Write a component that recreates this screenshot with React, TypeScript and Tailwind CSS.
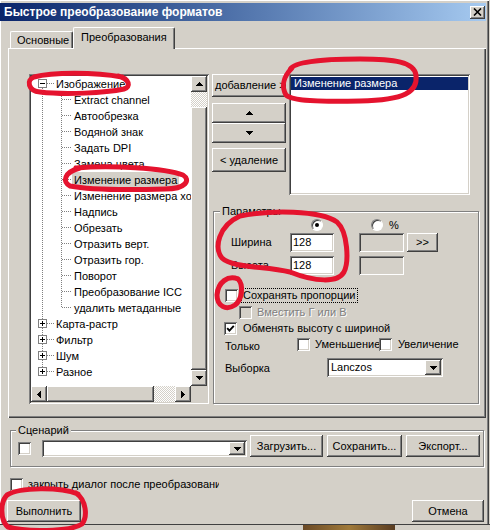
import React from "react";

const raised =
  "bg-[#d4d0c8] shadow-[inset_-1px_-1px_#404040,inset_1px_1px_#ffffff,inset_-2px_-2px_#808080,inset_2px_2px_#d4d0c8]";
const sunken =
  "shadow-[inset_1px_1px_#808080,inset_-1px_-1px_#ffffff,inset_2px_2px_#404040,inset_-2px_-2px_#d4d0c8]";
const hatch =
  "bg-[repeating-conic-gradient(#ffffff_0%_25%,#d4d0c8_0%_50%)] bg-[length:2px_2px]";
const etched =
  "border border-[#808080] shadow-[inset_1px_1px_0_#ffffff,1px_1px_0_#ffffff]";

type Dir = "up" | "down" | "left" | "right";

// little black scroll / combo arrows, drawn pixel by pixel
const Tri = ({ dir }: { dir: Dir }) => {
  const vertical = dir === "up" || dir === "down";
  return (
    <svg width={vertical ? 7 : 4} height={vertical ? 4 : 7} shapeRendering="crispEdges">
      {[0, 1, 2, 3].map((i) => {
        const len = 7 - 2 * i;
        if (dir === "down") return <rect key={i} x={i} y={i} width={len} height={1} fill="#000" />;
        if (dir === "up") return <rect key={i} x={i} y={3 - i} width={len} height={1} fill="#000" />;
        if (dir === "right") return <rect key={i} x={i} y={i} width={1} height={len} fill="#000" />;
        return <rect key={i} x={3 - i} y={i} width={1} height={len} fill="#000" />;
      })}
    </svg>
  );
};

const Check = ({ checked, disabled }: { checked?: boolean; disabled?: boolean }) => (
  <span
    className={`w-[13px] h-[13px] shrink-0 flex items-center justify-center ${sunken} ${
      disabled ? "bg-[#d4d0c8]" : "bg-white"
    }`}
  >
    {checked && (
      <svg width="13" height="13">
        <path d="M3.2 6.2 L5.4 8.6 L9.8 3.8" stroke="#000" strokeWidth="1.9" fill="none" />
      </svg>
    )}
  </span>
);

const Radio = ({ on }: { on?: boolean }) => (
  <span className="w-[12px] h-[12px] rounded-full bg-white border border-t-[#808080] border-l-[#808080] border-r-white border-b-white shadow-[inset_1px_1px_#404040] flex items-center justify-center">
    {on && <span className="w-[4px] h-[4px] rounded-full bg-black" />}
  </span>
);

const Combo = ({ text, className }: { text?: string; className: string }) => (
  <div className={`${className} ${sunken} bg-white p-[2px] flex`}>
    <span className="flex-1 pl-[2px] leading-[15px]">{text}</span>
    <span className={`${raised} w-[16px] flex items-center justify-center`}>
      <Tri dir="down" />
    </span>
  </div>
);

type Node = { t: string; lvl: 0 | 1; exp?: "+" | "-"; sel?: boolean };

const nodes: Node[] = [
  { t: "Изображение", lvl: 0, exp: "-" },
  { t: "Extract channel", lvl: 1 },
  { t: "Автообрезка", lvl: 1 },
  { t: "Водяной знак", lvl: 1 },
  { t: "Задать DPI", lvl: 1 },
  { t: "Замена цвета", lvl: 1 },
  { t: "Изменение размера", lvl: 1, sel: true },
  { t: "Изменение размера холста", lvl: 1 },
  { t: "Надпись", lvl: 1 },
  { t: "Обрезать", lvl: 1 },
  { t: "Отразить верт.", lvl: 1 },
  { t: "Отразить гор.", lvl: 1 },
  { t: "Поворот", lvl: 1 },
  { t: "Преобразование ICC", lvl: 1 },
  { t: "удалить метаданные", lvl: 1 },
  { t: "Карта-растр", lvl: 0, exp: "+" },
  { t: "Фильтр", lvl: 0, exp: "+" },
  { t: "Шум", lvl: 0, exp: "+" },
  { t: "Разное", lvl: 0, exp: "+" },
];

const TreeRow = ({ node, i }: { node: Node; i: number }) => {
  const next = nodes[i + 1];
  const dots = { stroke: "#808080", strokeDasharray: "1 1" };
  return (
    <div className="flex h-[16px] items-center whitespace-nowrap">
      {node.lvl === 0 ? (
        <svg width="23" height="16" className="shrink-0">
          <line x1="11.5" x2="11.5" y1={i === 0 ? 8 : 0} y2={next ? 16 : 8} {...dots} />
          <line x1="16" x2="23" y1="7.5" y2="7.5" {...dots} />
          <rect x="7.5" y="3.5" width="8" height="8" fill="#fff" stroke="#808080" />
          <line x1="9" x2="14" y1="7.5" y2="7.5" stroke="#000" />
          {node.exp === "+" && <line x1="11.5" x2="11.5" y1="5" y2="10" stroke="#000" />}
        </svg>
      ) : (
        <svg width="41" height="16" className="shrink-0">
          <line x1="11.5" x2="11.5" y1="0" y2="16" {...dots} />
          <line x1="30.5" x2="30.5" y1="0" y2={next && next.lvl === 1 ? 16 : 8} {...dots} />
          <line x1="31" x2="41" y1="7.5" y2="7.5" {...dots} />
        </svg>
      )}
      <span className={`px-[2px] leading-[16px] ${node.sel ? "bg-[#d4d0c8]" : ""}`}>{node.t}</span>
    </div>
  );
};

const Tree = () => (
  <div className={`w-[180px] h-[330px] shrink-0 bg-white p-[2px] flex flex-col ${sunken}`}>
    <div className="flex flex-1 min-h-0">
      <div className="flex-1 overflow-hidden">
        {nodes.map((n, i) => (
          <TreeRow key={i} node={n} i={i} />
        ))}
      </div>
      <div className="w-[16px] flex flex-col">
        <div className={`${raised} h-[16px] flex items-center justify-center`}>
          <Tri dir="up" />
        </div>
        <div className={`h-[15px] ${hatch}`} />
        <div className={`${raised} h-[263px]`} />
        <div className={`${raised} h-[16px] flex items-center justify-center`}>
          <Tri dir="down" />
        </div>
      </div>
    </div>
    <div className="flex h-[16px] bg-[#d4d0c8]">
      <div className={`${raised} w-[16px] flex items-center justify-center`}>
        <Tri dir="left" />
      </div>
      <div className={`${raised} w-[107px]`} />
      <div className={`w-[21px] ${hatch}`} />
      <div className={`${raised} w-[16px] flex items-center justify-center`}>
        <Tri dir="right" />
      </div>
    </div>
  </div>
);

const Params = () => (
  <fieldset className={`mt-[10px] ml-[1px] w-[266px] h-[199px] ${etched}`}>
    <legend className="ml-[6px] px-[2px] leading-[13px] bg-[#d4d0c8]">Параметры</legend>
    <div className="flex items-center h-[12px] mt-[1px] pl-[97px]">
      <Radio on />
      <span className="ml-[48px]">
        <Radio />
      </span>
      <span className="ml-[6px] leading-[12px]">%</span>
    </div>
    {["Ширина", "Высота"].map((label, i) => (
      <div key={label} className={`flex items-center h-[19px] pl-[17px] ${i === 0 ? "mt-[2px]" : "mt-[4px]"}`}>
        <span className="w-[59px]">{label}</span>
        <div className={`w-[44px] h-[19px] bg-white ${sunken} pl-[3px] leading-[19px]`}>128</div>
        <div className={`ml-[25px] w-[45px] h-[19px] bg-[#d4d0c8] ${sunken}`} />
        {i === 0 && (
          <button className={`ml-[3px] w-[31px] h-[19px] ${raised} leading-[19px] cursor-default`}>
            &gt;&gt;
          </button>
        )}
      </div>
    ))}
    <div className="flex items-center h-[15px] mt-[13px] pl-[11px]">
      <Check />
      <span className="ml-[3px] px-[1px] border border-dotted border-black leading-[13px]">
        Сохранять пропорции
      </span>
    </div>
    <div className="flex items-center h-[15px] mt-[2px] pl-[25px]">
      <Check disabled />
      <span className="ml-[5px] text-[#808080] [text-shadow:1px_1px_0_#ffffff]">Вместить Г или В</span>
    </div>
    <div className="flex items-center h-[15px] mt-[1px] pl-[10px]">
      <Check checked />
      <span className="ml-[6px]">Обменять высоту с шириной</span>
    </div>
    <div className="flex items-center h-[15px] mt-[1px] pl-[11px]">
      <span className="w-[72px] pt-[4px]">Только</span>
      <Check />
      <span className="ml-[5px] w-[64px] whitespace-nowrap">Уменьшение</span>
      <Check />
      <span className="ml-[6px]">Увеличение</span>
    </div>
    <div className="flex items-center h-[19px] mt-[6px] pl-[11px]">
      <span className="w-[102px] pt-[2px]">Выборка</span>
      <Combo text="Lanczos" className="w-[116px] h-[19px]" />
    </div>
  </fieldset>
);

const Annotations = () => (
  <svg
    className="absolute inset-0 pointer-events-none"
    width="490"
    height="530"
    fill="none"
    stroke="#e5132e"
    strokeWidth="5"
    strokeLinecap="round"
    strokeLinejoin="round"
  >
    <path d="M122 77 C95 72, 52 72, 34 77 C26 80, 28 91, 40 92 C65 95, 105 93, 124 89 C131 87, 130 79, 118 76" />
    <path d="M76 168 C110 165, 165 168, 183 175 C191 180, 186 189, 165 189 C130 190, 90 190, 70 186 C62 182, 64 172, 80 168" />
    <path d="M290 70 C292 62, 320 59, 360 59 C395 59, 414 62, 416 75 C418 92, 405 100, 360 101 C320 102, 292 101, 286 95 C282 88, 282 78, 292 68" />
    <path d="M240 216 C270 210, 320 210, 337 222 C348 232, 349 262, 344 272 C338 283, 315 282, 290 272 C265 266, 232 268, 222 258 C214 248, 218 226, 240 216" />
    <path d="M238 279 C228 275, 218 282, 217 295 C217 306, 226 311, 235 305 C242 300, 244 285, 238 279" />
    <path d="M78 494 C60 487, 20 487, 7 495 C0 502, 0 520, 8 527 C25 532, 70 532, 82 524 C88 516, 86 500, 76 493" />
  </svg>
);

export default function App() {
  return (
    <div className="relative w-[490px] h-[530px] overflow-hidden bg-[#d4d0c8] text-[11px] text-black font-['Liberation_Sans',sans-serif]">
      <div className="w-[489px] h-[524px] flex flex-col border-t border-white pt-[2px] shadow-[inset_1px_0_#ffffff,inset_-1px_0_#404040,inset_-2px_0_#808080]">
        {/* title bar */}
        <div className="mr-[3px] h-[18px] flex items-center bg-gradient-to-r from-[#0a246a] to-[#a6caf0]">
          <span className="pl-[4px] text-[12px] font-bold text-white whitespace-nowrap">
            Быстрое преобразование форматов
          </span>
          <div className={`ml-auto mr-[1px] w-[15px] h-[13px] ${raised} flex items-center justify-center`}>
            <svg width="9" height="8">
              <path d="M1 0.5 L8 7.5 M8 0.5 L1 7.5" stroke="#000" strokeWidth="1.6" />
            </svg>
          </div>
        </div>

        {/* tabs */}
        <div className="mt-[6px] ml-[10px] h-[21px] flex items-end">
          <div className="w-[63px] h-[17px] border-l border-t border-white border-r border-r-[#404040] shadow-[inset_-1px_0_#808080] rounded-t-[2px] pl-[6px] leading-[16px]">
            Основные
          </div>
          <div className="relative z-10 -mb-[1px] w-[102px] h-[22px] bg-[#d4d0c8] border-l border-t border-white border-r border-r-[#404040] shadow-[inset_-1px_0_#808080] rounded-t-[2px] pl-[7px] leading-[19px]">
            Преобразования
          </div>
        </div>

        {/* tab page */}
        <div className="ml-[8px] w-[478px] h-[370px] shrink-0 shadow-[inset_1px_1px_#ffffff,inset_-1px_-1px_#404040,inset_-2px_-2px_#808080] pt-[26px] pl-[21px] flex">
          <Tree />
          <div className="ml-[3px] w-[267px] flex flex-col">
            <div className="flex h-[121px]">
              <div className="w-[74px] flex flex-col">
                <button className={`${raised} h-[23px] pl-[3px] pr-[4px] text-left whitespace-nowrap overflow-hidden cursor-default`}>
                  добавление &gt;
                </button>
                <button className={`${raised} mt-[6px] h-[20px] flex items-center justify-center cursor-default`}>
                  <Tri dir="up" />
                </button>
                <button className={`${raised} h-[20px] flex items-center justify-center cursor-default`}>
                  <Tri dir="down" />
                </button>
                <button className={`${raised} mt-[5px] h-[24px] cursor-default`}>&lt; удаление</button>
              </div>
              <div className={`ml-[3px] w-[181px] bg-white p-[2px] ${sunken}`}>
                <div className="mt-[1px] h-[13px] leading-[13px] pl-[3px] bg-[#0a246a] text-white">
                  Изменение размера
                </div>
              </div>
            </div>
            <Params />
          </div>
        </div>

        {/* scenario */}
        <fieldset className={`mt-[7px] ml-[10px] w-[474px] h-[42px] ${etched}`}>
          <legend className="ml-[5px] px-[2px] leading-[10px] bg-[#d4d0c8]">Сценарий</legend>
          <div className="flex items-start">
            <span className="mt-[7px] ml-[7px]">
              <Check />
            </span>
            <Combo className="mt-[5px] ml-[11px] w-[205px] h-[17px]" />
            <button className={`${raised} ml-[3px] w-[73px] h-[22px] cursor-default`}>Загрузить...</button>
            <button className={`${raised} ml-[4px] w-[75px] h-[22px] cursor-default`}>Сохранить...</button>
            <button className={`${raised} ml-[4px] w-[74px] h-[22px] cursor-default`}>Экспорт...</button>
          </div>
        </fieldset>

        <div className="mt-[11px] ml-[10px] flex items-center h-[13px]">
          <Check />
          <span className="ml-[5px] w-[191px] overflow-hidden whitespace-nowrap">
            закрыть диалог после преобразования
          </span>
        </div>

        <div className="mt-[9px] flex h-[22px]">
          <button className={`${raised} ml-[7px] w-[74px] cursor-default`}>Выполнить</button>
          <button className={`${raised} ml-auto mr-[5px] w-[72px] cursor-default`}>Отмена</button>
        </div>
      </div>

      {/* window bottom edge and a bit of the desktop behind */}
      <div className="h-[6px] border-t border-[#404040] bg-[#d4d0c8] flex">
        <div className="ml-[303px] w-[92px] bg-gradient-to-r from-[#6b4a26] via-[#a07a3a] to-[#5a3d22]" />
      </div>

      <Annotations />
    </div>
  );
}
